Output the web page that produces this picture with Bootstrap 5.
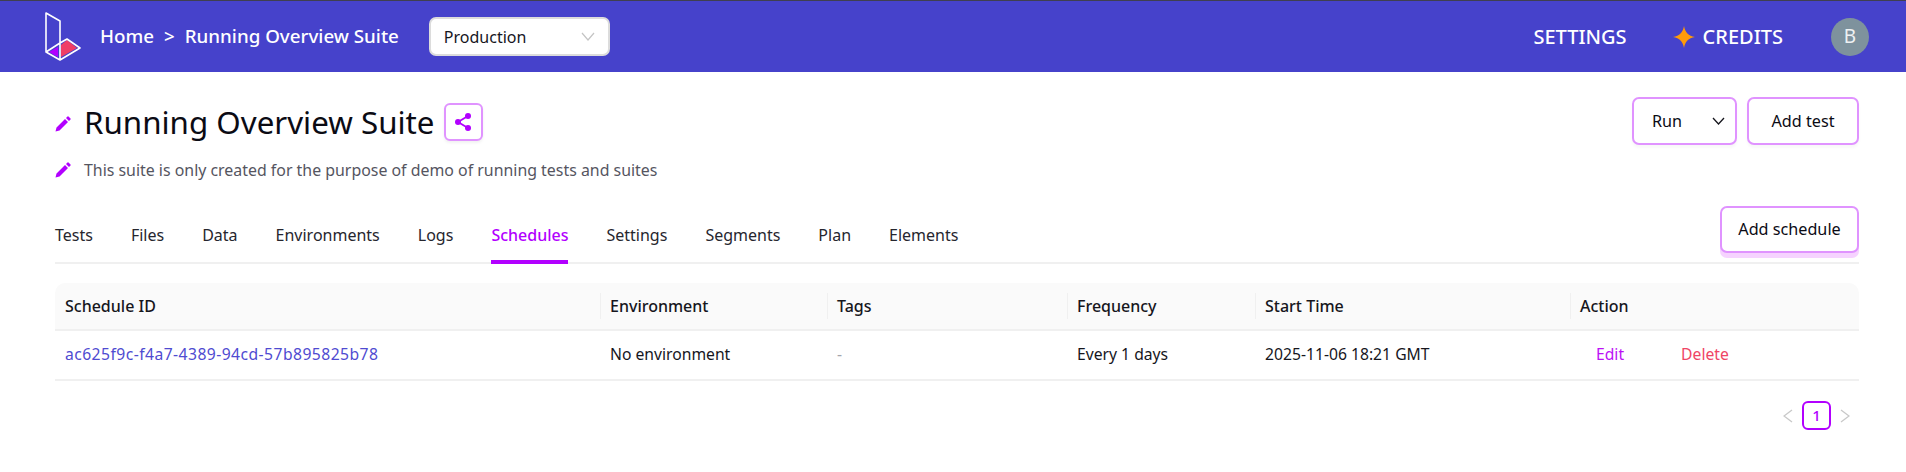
<!DOCTYPE html>
<html lang="en">
<head>
<meta charset="utf-8">
<title>Running Overview Suite</title>
<link href="https://cdn.jsdelivr.net/npm/bootstrap@5.3.0/dist/css/bootstrap.min.css" rel="stylesheet">
<style>
html,body{height:472px;overflow:hidden;background:#fff;}
body{font-family:"Noto Sans","Liberation Sans",sans-serif;color:#16161d;font-size:15px;}
.topbar{height:72px;background:#4642cb;border-top:1px solid #3f3f50;padding:0 37px 0 45px;color:#fff;}
.crumbs{font-size:18.75px;font-weight:500;margin-left:19px;gap:10px;color:#fff;}
.envpick{width:181px;height:39px;margin-left:30px;background:#fff;border:2px solid #dcdcdc;border-radius:7px;color:#16161d;font-size:16px;padding:0 13px;flex:none;}
.toplink{font-size:20px;font-weight:500;color:#fff;text-decoration:none;}
.sparkmark{margin-left:46px;}
.userdot{width:38px;height:38px;border-radius:50%;background:#7e929d;color:#eef1f3;font-size:19px;margin-left:48px;}
.pagebody{padding:0 47px 0 55px;}
.headrow{padding-top:27px;height:133px;}
.suite-title{font-size:31.300px;font-weight:400;line-height:46px;margin:0;color:#0b0b14;}
.sharebtn{width:39px;height:38px;border:2px solid #e093ff;border-radius:6px;background:#fff;box-shadow:0 2px 3px #0000000f;margin-left:9px;padding:0;flex:none;}
.suite-desc{font-size:15.900px;color:#55555f;margin:0;}
.penwrap{width:29px;flex:none;}
.penwrap.penhigh{margin-bottom:5px;}
.descline{margin-top:12px;}
.topactions{gap:10px;margin-top:-2px;}
.ghostbtn{border:2px solid #e093ff;border-radius:7px;background:#fff;color:#0b0b14;font-size:16.200px;height:48px;box-shadow:0 3px 3px #00000008;padding:0;}
.runbtn{width:105px;padding:0 10px 0 18px;}
.addtest{width:112px;}
.addsched{width:139px;height:47px;box-shadow:0 5px 0 #f6d3ff;margin-top:1px;}
.tabline{height:59px;border-bottom:2px solid #f0f0f0;gap:0;}
.tabitem{font-size:16px;color:#26262e;text-decoration:none;margin-right:38px;height:59px;line-height:24px;padding-top:18px;margin-bottom:-2px;border-bottom:4px solid transparent;}
.tabitem.tabon{color:#b200ff;border-bottom-color:#b200ff;font-weight:500;}
.schedgrid{margin:19px 0 0;width:1804px;table-layout:fixed;font-size:15.700px;}
.schedgrid th{background:#fafafa;font-weight:500;font-size:16px;height:47px;padding:0 10px;border-bottom:2px solid #f0f0f0;vertical-align:middle;color:#16161d;position:relative;}
.schedgrid th:first-child{border-top-left-radius:10px;}
.schedgrid th:last-child{border-top-right-radius:10px;}
.schedgrid th+th::before{content:"";position:absolute;left:0;top:10px;height:26px;width:1px;background:#f0f0f0;}
.schedgrid td{height:50px;padding:0 10px;border-bottom:2px solid #f0f0f0;vertical-align:middle;color:#16161d;}
.idlink{color:#4f4bd1;text-decoration:none;letter-spacing:.44px;}
.editlink{color:#bb11f5;text-decoration:none;margin-left:16px;}
.dellink{color:#ef4565;text-decoration:none;margin-left:57px;}
.schedgrid td.dash{color:#a4a4ac;}
.pager{margin-top:20px;gap:9px;padding-right:9px;}
.pagenow{width:29px;height:29px;border:2px solid #b200ff;border-radius:6px;color:#b200ff;font-size:15px;font-weight:500;}
</style>
</head>
<body>
<header class="topbar d-flex align-items-center">
  <svg width="36" height="49" viewBox="0 0 36 49" aria-label="logo">
    <path d="M4 40 L13 35 V45 Z" fill="#b200ff"/>
    <path d="M16 33 L22 28 L32 36 L16 45 Z" fill="#ef3e66"/>
    <path d="M1 1 L15 9 V31 L1 40 Z M1 40 L15 48 L35 36 L22 27 L15 31 M15 31 V48" fill="none" stroke="#fff" stroke-width="1.600" stroke-linejoin="round"/>
  </svg>
  <div class="crumbs d-flex align-items-center"><span>Home</span><span>&gt;</span><span>Running Overview Suite</span></div>
  <div class="envpick d-flex align-items-center justify-content-between"><span>Production</span>
    <svg width="14" height="9" viewBox="0 0 14 9"><path d="M1 1l6 7 6-7" fill="none" stroke="#c4c4c4" stroke-width="1.200"/></svg></div>
  <div class="ms-auto d-flex align-items-center">
    <a class="toplink" href="#">SETTINGS</a>
    <svg class="sparkmark" width="22" height="22" viewBox="0 0 20 20"><path d="M10 0 C11 6 14 9 20 10 C14 11 11 14 10 20 C9 14 6 11 0 10 C6 9 9 6 10 0Z" fill="#ff9a0a"/></svg>
    <a class="toplink ms-2" href="#">CREDITS</a>
    <div class="userdot d-flex align-items-center justify-content-center">B</div>
  </div>
</header>
<main class="pagebody">
  <section class="headrow d-flex justify-content-between align-items-start">
    <div>
      <div class="d-flex align-items-center">
        <div class="penwrap"><svg width="16" height="16" viewBox="0 0 16 16"><path d="M.5 15.500 1.500 11.500 10 3 13 6 4.500 14.500Z M11 2 12.500 .5Q13 0 13.500 .5L15.500 2.500Q16 3 15.500 3.500L14 5Z" fill="#b200ff"/></svg></div>
        <h1 class="suite-title">Running Overview Suite</h1>
        <button class="sharebtn d-flex align-items-center justify-content-center" type="button" aria-label="share">
          <svg width="18" height="20" viewBox="0 0 18 20"><circle cx="14" cy="4" r="3" fill="#b200ff"/><circle cx="14" cy="16" r="3" fill="#b200ff"/><circle cx="4" cy="10" r="3" fill="#b200ff"/><path d="M14 4L4 10l10 6" fill="none" stroke="#b200ff" stroke-width="1.800"/></svg>
        </button>
      </div>
      <div class="d-flex align-items-center descline">
        <div class="penwrap penhigh"><svg width="16" height="16" viewBox="0 0 16 16"><path d="M.5 15.500 1.500 11.500 10 3 13 6 4.500 14.500Z M11 2 12.500 .5Q13 0 13.500 .5L15.500 2.500Q16 3 15.500 3.500L14 5Z" fill="#b200ff"/></svg></div>
        <p class="suite-desc">This suite is only created for the purpose of demo of running tests and suites</p>
      </div>
    </div>
    <div class="d-flex topactions">
      <button class="ghostbtn runbtn d-flex align-items-center justify-content-between" type="button"><span>Run</span>
        <svg width="13" height="8" viewBox="0 0 13 8"><path d="M1 1l5.500 6L12 1" fill="none" stroke="#16161d" stroke-width="1.300"/></svg></button>
      <button class="ghostbtn addtest" type="button">Add test</button>
    </div>
  </section>
  <nav class="tabline d-flex position-relative">
    <a class="tabitem" href="#">Tests</a>
    <a class="tabitem" href="#">Files</a>
    <a class="tabitem" href="#">Data</a>
    <a class="tabitem" href="#">Environments</a>
    <a class="tabitem" href="#">Logs</a>
    <a class="tabitem tabon" href="#">Schedules</a>
    <a class="tabitem" href="#">Settings</a>
    <a class="tabitem" href="#">Segments</a>
    <a class="tabitem" href="#">Plan</a>
    <a class="tabitem" href="#">Elements</a>
    <button class="ghostbtn addsched ms-auto" type="button">Add schedule</button>
  </nav>
  <table class="table schedgrid">
    <colgroup><col style="width:545px"><col style="width:227px"><col style="width:240px"><col style="width:188px"><col style="width:315px"><col></colgroup>
    <thead><tr><th>Schedule ID</th><th>Environment</th><th>Tags</th><th>Frequency</th><th>Start Time</th><th>Action</th></tr></thead>
    <tbody><tr>
      <td><a class="idlink" href="#">ac625f9c-f4a7-4389-94cd-57b895825b78</a></td>
      <td>No environment</td><td class="dash">-</td><td>Every 1 days</td><td>2025-11-06 18:21 GMT</td>
      <td><a class="editlink" href="#">Edit</a><a class="dellink" href="#">Delete</a></td>
    </tr></tbody>
  </table>
  <div class="pager d-flex justify-content-end align-items-center">
    <svg width="10" height="14" viewBox="0 0 10 14"><path d="M9 1L1 7l8 6" fill="none" stroke="#c8c8c8" stroke-width="1.300"/></svg>
    <div class="pagenow d-flex align-items-center justify-content-center">1</div>
    <svg width="10" height="14" viewBox="0 0 10 14"><path d="M1 1l8 6-8 6" fill="none" stroke="#c8c8c8" stroke-width="1.300"/></svg>
  </div>
</main>
<script src="https://cdn.jsdelivr.net/npm/bootstrap@5.3.0/dist/js/bootstrap.bundle.min.js"></script>
</body>
</html>
